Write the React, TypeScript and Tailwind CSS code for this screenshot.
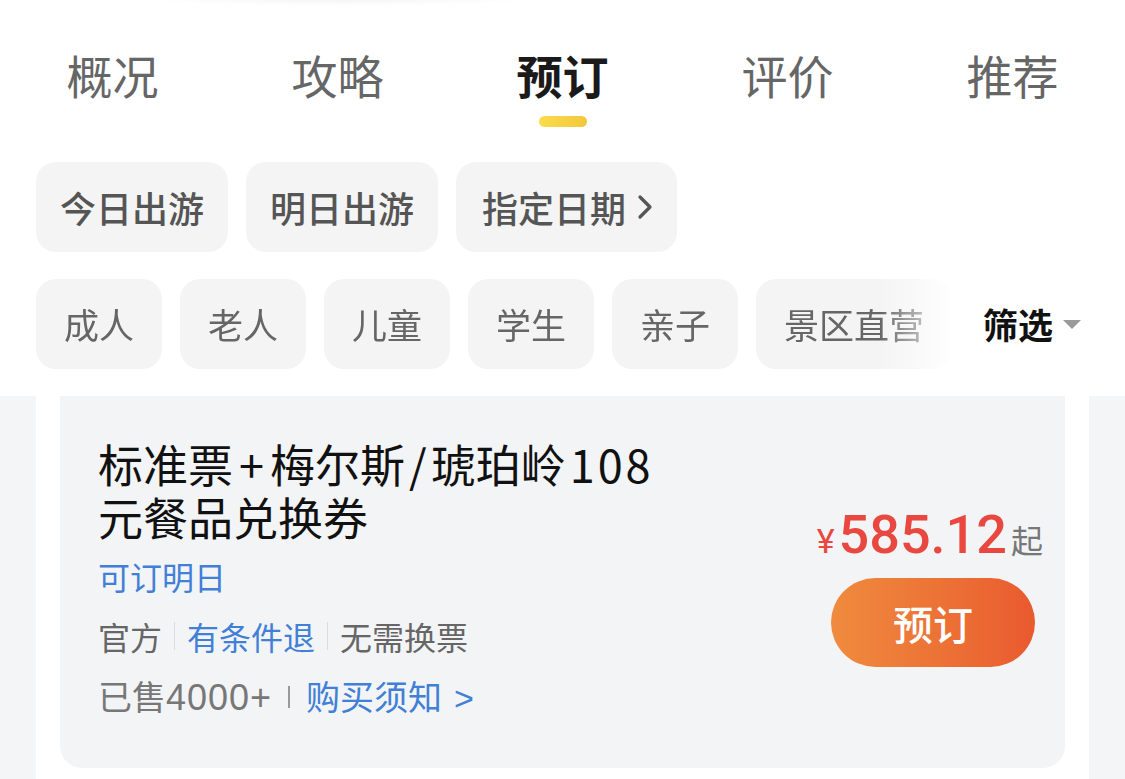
export default function App() {
  const tabs = ["概况", "攻略", "预订", "评价", "推荐"];
  const people = ["成人", "老人", "儿童", "学生", "亲子"];

  return (
    <div className="flex h-[779px] w-full flex-col overflow-hidden bg-white font-['Noto_Sans_CJK_SC',sans-serif]">
      {/* faint edge of the search bar above */}
      <div className="ml-[150px] h-[6px] w-[380px] bg-[radial-gradient(ellipse_at_top,#f5f5f5,transparent_70%)]" />

      {/* Tabs */}
      <div className="grid grid-cols-5 pt-[45px]">
        {tabs.map((t) => {
          const active = t === "预订";
          return (
            <div key={t} className="flex flex-col items-center">
              <span
                className={
                  active
                    ? "text-[46px] leading-[46px] font-bold text-[#1a1a1a]"
                    : "text-[46px] leading-[46px] text-[#666]"
                }
              >
                {t}
              </span>
              <div
                className={
                  active
                    ? "mt-[19px] h-[11px] w-[48px] rounded-full bg-linear-to-r from-[#f9dc4d] to-[#f3c83a]"
                    : "mt-[19px] h-[11px] w-[48px]"
                }
              />
            </div>
          );
        })}
      </div>

      {/* Date chips */}
      <div className="mt-[35px] flex gap-[18px] pl-[36px]">
        <div className="flex h-[90px] items-center rounded-[20px] bg-[#f4f4f4] px-[24px] text-[36px] font-medium text-[#555]">
          今日出游
        </div>
        <div className="flex h-[90px] items-center rounded-[20px] bg-[#f4f4f4] px-[24px] text-[36px] font-medium text-[#555]">
          明日出游
        </div>
        <div className="flex h-[90px] items-center rounded-[20px] bg-[#f4f4f4] pl-[26px] pr-[24px] text-[36px] font-medium text-[#555]">
          指定日期
          <svg className="ml-[11px]" width="16" height="26" viewBox="0 0 16 26" fill="none">
            <path d="M3 3l10 10-10 10" stroke="#555" strokeWidth="3.2" strokeLinecap="round" strokeLinejoin="round" />
          </svg>
        </div>
      </div>

      {/* Type chips + filter */}
      <div className="mt-[27px] flex">
        <div className="flex flex-1 gap-[18px] overflow-hidden pl-[36px] [mask-image:linear-gradient(to_right,black_calc(100%-80px),transparent_calc(100%-4px))]">
          {people.map((p) => (
            <div
              key={p}
              className="flex h-[90px] w-[126px] shrink-0 items-center justify-center rounded-[20px] bg-[#f4f4f4] text-[35px] text-[#666]"
            >
              {p}
            </div>
          ))}
          <div className="flex h-[90px] shrink-0 items-center rounded-[20px] bg-[#f4f4f4] px-[28px] text-[35px] text-[#666]">
            景区直营
          </div>
        </div>
        <div className="flex w-[165px] shrink-0 items-center gap-[10px] pl-[23px]">
          <span className="text-[35px] font-bold text-[#111]">筛选</span>
          <div className="h-0 w-0 border-x-[9px] border-t-[9px] border-x-transparent border-t-[#9a9a9a]" />
        </div>
      </div>

      {/* Ticket list */}
      <div className="mt-[27px] flex flex-1">
        <div className="w-[36px] bg-[#f4f5f7]" />
        <div className="flex-1 bg-white px-[24px] pb-[11px]">
          <div className="flex h-full items-center justify-between rounded-b-[22px] bg-[#f3f4f6] pl-[38px] pr-[30px]">
            <div className="flex flex-col">
              <div className="text-[45px] leading-[53px] text-[#111]">
                标准票<span className="mx-[6px]">+</span>梅尔斯<span className="mx-[4px]">/</span>琥珀岭
                <span className="ml-[4px] tracking-[3px]">108</span>
                <br />
                元餐品兑换券
              </div>
              <div className="mt-[3px] text-[32px] leading-[60px] text-[#4180d6]">可订明日</div>
              <div className="flex items-center text-[32px] leading-[60px] text-[#666]">
                <span>官方</span>
                <span className="mx-[12px] h-[28px] w-px bg-[#dcdcdc]" />
                <span className="text-[#4180d6]">有条件退</span>
                <span className="mx-[12px] h-[28px] w-px bg-[#dcdcdc]" />
                <span>无需换票</span>
              </div>
              <div className="flex items-center text-[34px] leading-[60px] text-[#777]">
                <span>
                  已售<span className="font-['Liberation_Sans',sans-serif] text-[36px] tracking-[1px]">4000+</span>
                </span>
                <span className="mx-[16px] h-[22px] w-[2px] bg-[#999]" />
                <span className="text-[#4180d6]">
                  购买须知
                  <span className="ml-[12px] font-['Liberation_Sans',sans-serif] text-[34px]">&gt;</span>
                </span>
              </div>
            </div>

            <div className="flex flex-col items-end pt-[8px]">
              <div className="mr-[-8px] flex items-baseline leading-[60px]">
                <span className="mr-[4px] font-['Roboto',sans-serif] text-[34px] text-[#e8483f]">¥</span>
                <span className="font-['Roboto',sans-serif] text-[54px] font-medium text-[#e8483f]">585.12</span>
                <span className="ml-[4px] text-[32px] text-[#777]">起</span>
              </div>
              <button className="mt-[7px] flex h-[89px] w-[204px] items-center justify-center rounded-full bg-linear-to-r from-[#ef8b3e] to-[#e95a2f] text-[40px] font-medium text-white">
                预订
              </button>
            </div>
          </div>
        </div>
        <div className="w-[36px] bg-[#f4f5f7]" />
      </div>
    </div>
  );
}
